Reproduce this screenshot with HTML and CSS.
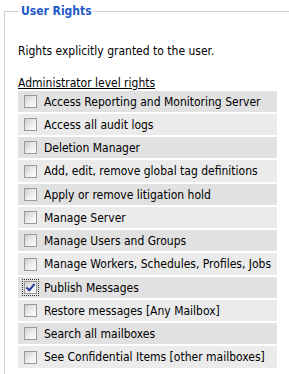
FILE: index.html
```html
<!DOCTYPE html>
<html lang="en">
<head>
  <meta charset="UTF-8">
  <meta name="viewport" content="width=device-width, initial-scale=1.0">
  <title>User Rights</title>
<link rel="stylesheet" href="styles.css">
</head>
<body>

<fieldset class="rights_box">
  <legend>User Rights</legend>
  <p class="intro">Rights explicitly granted to the user.</p>

  <h2 class="group_title">Administrator level rights</h2>

  <ul class="rights_list">
    <li><label><input type="checkbox"> Access Reporting and Monitoring Server</label></li>
    <li><label><input type="checkbox"> Access all audit logs</label></li>
    <li><label><input type="checkbox"> Deletion Manager</label></li>
    <li><label><input type="checkbox"> Add, edit, remove global tag definitions</label></li>
    <li><label><input type="checkbox"> Apply or remove litigation hold</label></li>
    <li><label><input type="checkbox"> Manage Server</label></li>
    <li><label><input type="checkbox"> Manage Users and Groups</label></li>
    <li><label><input type="checkbox"> Manage Workers, Schedules, Profiles, Jobs</label></li>
    <li><label><input type="checkbox" class="focused" checked> Publish Messages</label></li>
    <li><label><input type="checkbox"> Restore messages [Any Mailbox]</label></li>
    <li><label><input type="checkbox"> Search all mailboxes</label></li>
    <li><label><input type="checkbox"> See Confidential Items [other mailboxes]</label></li>
  </ul>
</fieldset>

</body>
</html>
```

FILE: styles.css
```css
*{
    padding: 0;
    margin: 0;
    box-sizing: border-box;
}
body{
    background: #ffffff;
    color: #000000;
    font-family: "DejaVu Sans Condensed", "DejaVu Sans", sans-serif;
    font-stretch: condensed;
    font-size: 12px;
    overflow: hidden;
}

/* outer group box */
.rights_box{
    margin: 4px 0 0 4px;
    width: 300px;
    min-height: 400px;
    border: 1px solid #d0d0d0;
    padding: 0 0 0 13px;
}
.rights_box legend{
    margin-left: 1px;
    padding: 0 2px;
    color: #1f5bc8;
    font-weight: bold;
    font-size: 12px;
    line-height: 14px;
}

.intro{
    margin-top: 26px;
    line-height: 15px;
}

.group_title{
    margin-top: 17px;
    font-size: 12px;
    font-weight: normal;
    text-decoration: underline;
    line-height: 14px;
}

.rights_list{
    list-style: none;
    width: 259px;
    margin-top: 1px;
    display: flex;
    flex-direction: column;
    gap: 2px;
}
.rights_list li{
    height: 21px;
    background: #ebebeb;
}
.rights_list li:nth-child(odd){
    background: #e1e1e1;
}
.rights_list li:nth-child(4n){
    height: 22px;
}
.rights_list label{
    display: flex;
    align-items: center;
    height: 100%;
    padding-left: 6px;
    gap: 7px;
    white-space: nowrap;
}

/* classic silver checkbox */
.rights_list input[type=checkbox]{
    -webkit-appearance: none;
    appearance: none;
    width: 13px;
    height: 13px;
    flex: none;
    border: 1px solid #9a9a9a;
    background: linear-gradient(135deg, #cfcfcf 0%, #f0f0f0 60%, #ffffff 100%);
    position: relative;
}
.rights_list input[type=checkbox]:checked::after{
    content: "";
    position: absolute;
    left: 3px;
    top: 0px;
    width: 3px;
    height: 7px;
    border: solid #2c3f9c;
    border-width: 0 2px 2px 0;
    transform: rotate(40deg);
}
.rights_list input.focused{
    outline: 1px dotted #333333;
    outline-offset: 1px;
}
```
